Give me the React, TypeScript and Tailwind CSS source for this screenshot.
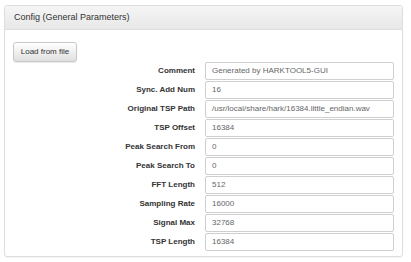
import React from 'react';

const params: { label: string; value: string }[] = [
  { label: 'Comment', value: 'Generated by HARKTOOL5-GUI' },
  { label: 'Sync. Add Num', value: '16' },
  { label: 'Original TSP Path', value: '/usr/local/share/hark/16384.little_endian.wav' },
  { label: 'TSP Offset', value: '16384' },
  { label: 'Peak Search From', value: '0' },
  { label: 'Peak Search To', value: '0' },
  { label: 'FFT Length', value: '512' },
  { label: 'Sampling Rate', value: '16000' },
  { label: 'Signal Max', value: '32768' },
  { label: 'TSP Length', value: '16384' },
];

export default function App() {
  return (
    <div className="h-[262px] w-[411px] bg-white pl-[4px] pt-[5px] font-['Liberation_Sans',Arial,sans-serif] text-[#333]">
      <div className="h-[252px] w-[399px] rounded-[3px] border border-[#dedede] shadow-[0_1px_1px_rgba(0,0,0,0.05)]">
        <div className="flex h-[24px] items-center rounded-t-[3px] border-b border-[#dedede] bg-gradient-to-b from-[#f5f5f5] to-[#e8e8e8] px-[9px] text-[9px]">
          Config (General Parameters)
        </div>
        <div className="px-[8px] pt-[7px]">
          <button className="h-[20px] w-[64px] rounded-[3px] border border-[#c8c8c8] bg-gradient-to-b from-white to-[#e0e0e0] text-[8px] text-[#333] shadow-[0_1px_1px_rgba(0,0,0,0.08)]">
            Load from file
          </button>
          <div className="mt-[-1px] flex flex-col">
            {params.map((p) => (
              <div key={p.label} className="flex h-[19px] items-center">
                <div className="w-[187px] pr-[3px] text-right text-[8px] font-bold text-[#333]">{p.label}</div>
                <div className="ml-[7px] flex h-[18px] w-[191px] items-center rounded-[2px] border border-[#cfcfcf] bg-white pl-[6px] text-[8px] text-[#666]">
                  {p.value}
                </div>
              </div>
            ))}
          </div>
        </div>
      </div>
    </div>
  );
}
